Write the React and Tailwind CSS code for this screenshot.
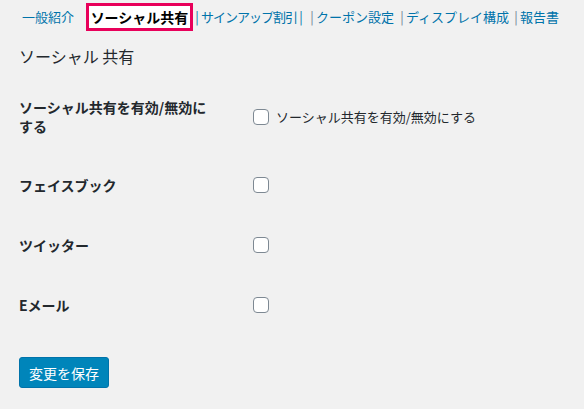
const tabs = [
  { label: 'クーポン設定', w: 'w-[76px]', gap: 'ml-[3px]' },
  { label: 'ディスプレイ構成', w: 'w-[98px]', gap: 'ml-[6px]' },
  { label: '報告書', w: 'w-[41px]', gap: 'ml-[8px]' },
]

const rows = [
  { label: ['ソーシャル共有を有効/無効に', 'する'], text: 'ソーシャル共有を有効/無効にする', h: 'h-[76px]' },
  { label: ['フェイスブック'], h: 'h-[60px]' },
  { label: ['ツイッター'], h: 'h-[60px]' },
  { label: ['Eメール'], h: 'h-[60px]' },
]

function Checkbox() {
  return <span className="block w-4 h-4 shrink-0 rounded-[4px] border border-[#7e8993] bg-white" />
}

function Pipe({ blue }) {
  return (
    <span className={`w-[8px] shrink-0 flex justify-center ${blue ? 'text-[#0073aa]' : 'text-[#6f8094]'}`}>|</span>
  )
}

export default function App() {
  return (
    <div className="w-[584px] h-[409px] overflow-hidden bg-[#f1f1f1] text-[#23282d] font-['Meiryo','Noto_Sans_CJK_JP',sans-serif]">
      {/* tab links */}
      <nav className="flex items-center h-[32px] pt-[1px] text-[13px] leading-none text-[#0073aa] whitespace-nowrap">
        <span className="ml-[22px] w-[55px]">一般紹介</span>
        <span className="ml-[9px] flex items-center justify-center w-[107px] h-[28px] border-[3px] border-[#e8005a] bg-white text-black font-bold text-[14px]">
          ソーシャル共有
        </span>
        <Pipe blue />
        <span className="shrink-0 tracking-[-1px]">サインアップ割引</span>
        <Pipe blue />
        {tabs.map((t) => (
          <span key={t.label} className={`flex items-center shrink-0 ${t.gap}`}>
            <Pipe />
            <span className={t.w}>{t.label}</span>
          </span>
        ))}
      </nav>

      <div className="pl-[19px]">
        <h2 className="mt-[14px] h-[20px] flex items-center text-[16px] font-normal leading-none">ソーシャル 共有</h2>

        <div className="mt-[13px]">
          {rows.map((r) => (
            <div key={r.label[0]} className={`flex items-center ${r.h}`}>
              <div className="w-[234px] text-[14px] font-bold leading-[19px]">
                {r.label.map((l) => <div key={l}>{l}</div>)}
              </div>
              <div className="flex items-center gap-[7px] text-[13px]">
                <Checkbox />
                {r.text && <span>{r.text}</span>}
              </div>
            </div>
          ))}
        </div>

        <button className="mt-[22px] w-[90px] h-[31px] rounded-[3px] border border-[#0073aa] bg-[#0085ba] text-white text-[14px] leading-none">
          変更を保存
        </button>
      </div>
    </div>
  )
}
